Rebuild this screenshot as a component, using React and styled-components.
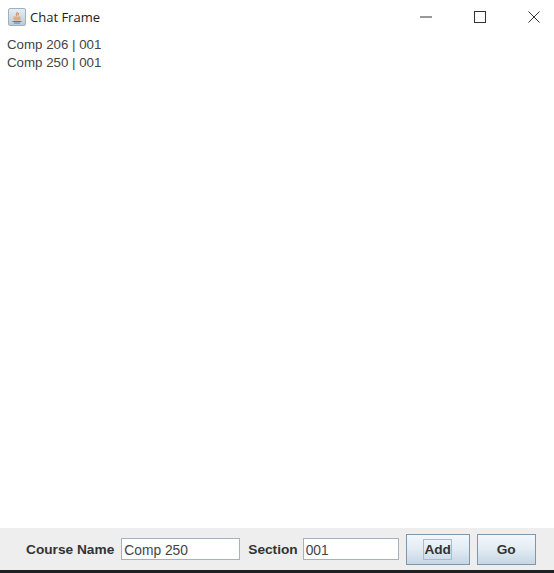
import React from "react";
import styled, { createGlobalStyle } from "styled-components";

const Global = createGlobalStyle`
  html, body {
    margin: 0;
    padding: 0;
    background: #fff;
  }
`;

const Frame = styled.div`
  width: 554px;
  height: 573px;
  display: flex;
  flex-direction: column;
  overflow: hidden;
  background: #fff;
  font-family: "Liberation Sans", Arial, sans-serif;
`;

const TitleBar = styled.div`
  height: 34px;
  flex: none;
  display: flex;
  align-items: center;
  padding-left: 8px;
`;

const AppIcon = styled.div`
  width: 16px;
  height: 16px;
  border: 1px solid #9fb0c0;
  border-radius: 2px;
  background: linear-gradient(#e6edf3, #bccbd8);
  display: flex;
  align-items: center;
  justify-content: center;
`;

const Title = styled.span`
  margin-left: 4px;
  font-family: "Open Sans", "Noto Sans", sans-serif;
  font-size: 13px;
  color: #1c1c1c;
`;

const WindowButtons = styled.div`
  margin-left: auto;
  display: flex;
  align-items: center;
  gap: 14px;
`;

const WindowButton = styled.div`
  width: 40px;
  height: 34px;
  display: flex;
  align-items: center;
  justify-content: center;
  svg {
    display: block;
  }
`;

const CourseList = styled.div`
  flex: 1;
  padding: 2px 0 0 7px;
`;

const CourseRow = styled.div`
  font-size: 13.3px;
  line-height: 18px;
  color: #444;
`;

const BottomBar = styled.div`
  height: 42px;
  flex: none;
  display: flex;
  align-items: center;
  padding-left: 26px;
  background: #eeeeee;
`;

const Label = styled.label`
  padding-top: 1px;
  font-size: 13.7px;
  font-weight: 700;
  color: #333;
  margin-right: ${(p) => p.$gap}px;
`;

const Field = styled.input`
  box-sizing: border-box;
  width: ${(p) => p.$width}px;
  height: 22px;
  margin-right: ${(p) => p.$gap}px;
  padding: 2px 2px 0;
  border: 1px solid #a3b3c2;
  border-radius: 0;
  outline: none;
  background: #fff;
  font-family: "Liberation Sans", Arial, sans-serif;
  font-size: 13.8px;
  color: #444;
`;

const Button = styled.button`
  box-sizing: border-box;
  width: ${(p) => p.$width}px;
  height: 31px;
  margin-right: ${(p) => p.$gap}px;
  padding: 1px 0 0;
  border: 1px solid #7f97ab;
  border-radius: 0;
  background: linear-gradient(#f3f7fa 0%, #e4edf4 45%, #c6d6e4 100%);
  font-family: "Liberation Sans", Arial, sans-serif;
  font-size: 13.7px;
  font-weight: 700;
  color: #333;
  display: flex;
  align-items: center;
  justify-content: center;
`;

const FocusRing = styled.span`
  padding: 2px 0;
  border: 1px solid #a9bccb;
`;

const DarkStrip = styled.div`
  height: 3px;
  flex: none;
  background: #1f2225;
`;

function JavaIcon() {
  return (
    <svg width="12" height="13" viewBox="0 0 12 13">
      <path d="M6 1c1 1-1.500 2-.5 3.500M7.500 2c.5 1-1 1.500-.5 2.500" fill="none" stroke="#d9662c" strokeWidth="1" />
      <path d="M2.500 5.500h7v2.500c0 1-1 1.500-2 1.500h-3c-1 0-2-.5-2-1.500z" fill="#e8a878" />
      <path d="M1.500 10.500h9M3 12h6" stroke="#5f7f9f" strokeWidth="1" />
    </svg>
  );
}

export default function App() {
  return (
    <Frame>
      <Global />
      <TitleBar>
        <AppIcon>
          <JavaIcon />
        </AppIcon>
        <Title>Chat Frame</Title>
        <WindowButtons>
          <WindowButton>
            <svg width="12" height="2" viewBox="0 0 12 2">
              <path d="M0 1h12" stroke="#333" strokeWidth="1" />
            </svg>
          </WindowButton>
          <WindowButton>
            <svg width="12" height="12" viewBox="0 0 12 12">
              <rect x="0.500" y="0.500" width="11" height="11" fill="none" stroke="#333" strokeWidth="1" />
            </svg>
          </WindowButton>
          <WindowButton>
            <svg width="12" height="12" viewBox="0 0 12 12">
              <path d="M.5.500l11 11M11.500.500l-11 11" fill="none" stroke="#333" strokeWidth="1" />
            </svg>
          </WindowButton>
        </WindowButtons>
      </TitleBar>
      <CourseList>
        <CourseRow>Comp 206 | 001</CourseRow>
        <CourseRow>Comp 250 | 001</CourseRow>
      </CourseList>
      <BottomBar>
        <Label $gap={7}>Course Name</Label>
        <Field $width={119} $gap={8} defaultValue="Comp 250" />
        <Label $gap={5}>Section</Label>
        <Field $width={96} $gap={7} defaultValue="001" />
        <Button $width={64} $gap={7}>
          <FocusRing>Add</FocusRing>
        </Button>
        <Button $width={59} $gap={0}>
          Go
        </Button>
      </BottomBar>
      <DarkStrip />
    </Frame>
  );
}
